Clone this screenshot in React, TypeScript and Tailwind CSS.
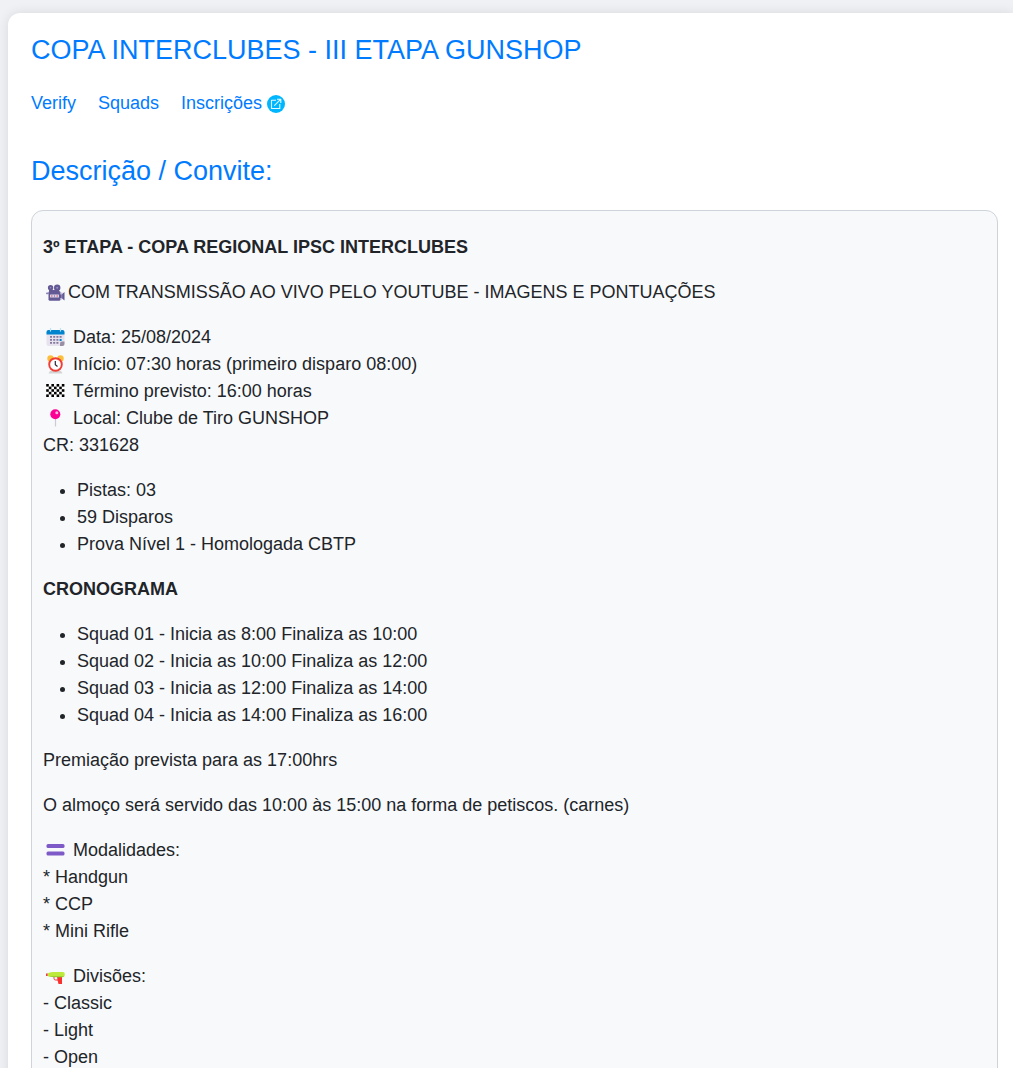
import type { ReactNode } from "react";

const iconClass = "mx-[3px] inline-block h-[19px] w-[19px] align-[-4px]";

function Icon({ children }: { children: ReactNode }) {
  return (
    <svg viewBox="0 0 19 19" className={iconClass} aria-hidden="true">
      {children}
    </svg>
  );
}

function CameraIcon() {
  return (
    <Icon>
      <circle cx="4.6" cy="4.700" r="2.700" fill="#635994" />
      <circle cx="11.200" cy="4.700" r="3.200" fill="#635994" />
      <circle cx="4.600" cy="4.700" r=".8" fill="#998ec7" />
      <circle cx="11.200" cy="4.700" r="1" fill="#998ec7" />
      <path d="M3 7h10v2H3z" fill="#635994" />
      <rect x="2.500" y="8" width="12" height="9.700" rx="1.500" fill="#635994" />
      <path d="M14 11.500h1.500L18.500 9v8.500l-3-2.500H14z" fill="#635994" />
      <path d="M15.800 9.500v7" stroke="#a39cc8" strokeWidth=".8" />
      <rect x="0" y="9.500" width="3" height="1.800" rx=".8" fill="#8b84b5" />
      <rect x="4" y="11.500" width="9" height="3" rx=".5" fill="#d9d5e8" />
      <rect x="5" y="12.500" width="1.500" height="1" fill="#e84a5c" />
      <rect x="8" y="12.500" width="1" height="1" fill="#635994" />
      <rect x="10.500" y="12.500" width="1.500" height="1" fill="#e84a5c" />
    </Icon>
  );
}

function CalendarIcon() {
  return (
    <Icon>
      <path d="M.5 3h18v12l-3 3h-13a2 2 0 0 1-2-2z" fill="#e7e3ee" />
      <path d="M18.500 13.500V16a2 2 0 0 1-2 2H14v-2.500a2 2 0 0 1 2-2z" fill="#998ea4" />
      <path d="M.5 6.500V4a2 2 0 0 1 2-2h14a2 2 0 0 1 2 2v2.500z" fill="#0084ce" />
      <path d="M4.500 0v3.500M14.500 0v3.500" stroke="#bde4f5" strokeWidth="1.200" />
      <path
        d="M4 8h2v1.800H4zM7.200 8h2v1.800h-2zM10.400 8h2v1.800h-2zM13.600 8h2v1.800h-2zM4 11h2v1.800H4zM7.200 11h2v1.800h-2zM10.400 11h2v1.800h-2zM4 14h2v1.800H4zM7.200 14h2v1.800h-2zM10.400 14h2v1.800h-2z"
        fill="#83789d"
      />
      <path d="M13.600 11h2v2h-2z" fill="#0084ce" />
    </Icon>
  );
}

function AlarmIcon() {
  return (
    <Icon>
      <path d="M4 16h11l1.500 2.500h-14z" fill="#d3d3d3" />
      <circle cx="4.500" cy="3.500" r="3.200" fill="#fcbf3b" />
      <circle cx="14.500" cy="3.500" r="3.200" fill="#fcbf3b" />
      <circle cx="9.500" cy="9.500" r="6.300" fill="#fff" stroke="#f13b35" strokeWidth="1.900" />
      <path d="M9.300 6v3.800l2.200 1.700" fill="none" stroke="#2b2630" strokeWidth="1.200" />
    </Icon>
  );
}

function CheckeredIcon() {
  const squares: ReactNode[] = [];
  for (let row = 0; row < 5; row++) {
    for (let col = 0; col < 7; col++) {
      if ((row + col) % 2 === 0) {
        squares.push(
          <rect key={`${row}-${col}`} x={0.2 + col * 2.6} y={2 + row * 2.6} width="2.6" height="2.6" />,
        );
      }
    }
  }
  return (
    <Icon>
      <rect x=".2" y="2" width="18.200" height="13" fill="#fff" />
      <g fill="#000">{squares}</g>
    </Icon>
  );
}

function PinIcon() {
  return (
    <Icon>
      <path d="M9.500 9v8.500" stroke="#cfcbd6" strokeWidth="1.200" />
      <circle cx="9.300" cy="5.200" r="5" fill="#fc0095" />
      <circle cx="10.800" cy="3.800" r="1.500" fill="#ffb8e0" />
    </Icon>
  );
}

function EqualsIcon() {
  return (
    <Icon>
      <rect x=".5" y="3" width="18" height="4" rx="1.500" fill="#7d5ac7" />
      <rect x=".5" y="10.500" width="18" height="4" rx="1.500" fill="#7d5ac7" />
    </Icon>
  );
}

function WaterGunIcon() {
  return (
    <Icon>
      <path d="M0 6.500h2V9H0z" fill="#f92f60" />
      <path d="M11 9.500h5v7.500h-3.500L11.500 13z" fill="#f8312f" />
      <path d="M8 10v1.500q0 1.500 1.500 1.500h3" fill="none" stroke="#f8312f" strokeWidth="1" />
      <path d="M1.500 6.500q2-1.500 5-1.500H17q1.700 0 1.700 1.700v1.600q0 1.700-1.700 1.700H7Q3 10 1.500 9z" fill="#bdea3a" />
      <path d="M3 9q3 1.300 6 1.300h8l1-1.300z" fill="#9bce32" />
    </Icon>
  );
}

function ExternalIcon() {
  return (
    <svg viewBox="0 0 18 18" className="ml-[5px] inline-block h-[18px] w-[18px] align-[-4px]" aria-hidden="true">
      <circle cx="9" cy="9" r="9" fill="#00b7ff" />
      <path
        d="M9 5.200H4.500v8.300h8.300V9M10 4.200h3.800V8M13.800 4.200 7.300 10.700"
        fill="none"
        stroke="#e8faff"
        strokeWidth="1.100"
        strokeLinejoin="round"
      />
    </svg>
  );
}

const squads = [
  "Squad 01 - Inicia as 8:00 Finaliza as 10:00",
  "Squad 02 - Inicia as 10:00 Finaliza as 12:00",
  "Squad 03 - Inicia as 12:00 Finaliza as 14:00",
  "Squad 04 - Inicia as 14:00 Finaliza as 16:00",
];

function BulletList({ items }: { items: string[] }) {
  return (
    <ul className="list-disc pl-[34px]">
      {items.map((item) => (
        <li key={item}>{item}</li>
      ))}
    </ul>
  );
}

export default function App() {
  return (
    <div className="flex h-screen flex-col overflow-hidden bg-[#f0f1f5] pt-[13px] pl-2 font-['Liberation_Sans',Arial,sans-serif] text-[18px] leading-[27px] text-[#212529]">
      <main className="grow rounded-tl-xl bg-white pt-5 pr-[15px] pl-[23px] shadow-[0_0_12px_rgba(0,0,0,0.1)]">
        <h1 className="text-[27px] leading-[34px] text-[#007bff]">COPA INTERCLUBES - III ETAPA GUNSHOP</h1>
        <nav className="mt-[23px] flex gap-[22px] text-[#007bff]">
          <a href="#verify">Verify</a>
          <a href="#squads">Squads</a>
          <a href="#inscricoes">
            Inscrições
            <ExternalIcon />
          </a>
        </nav>
        <h2 className="mt-[37px] text-[27px] leading-[34px] text-[#007bff]">Descrição / Convite:</h2>
        <section className="mt-[22px] flex flex-col gap-[18px] rounded-xl border border-[#ced4da] bg-[#f8f9fb] px-[11px] py-[23px]">
          <p className="font-bold">3º ETAPA - COPA REGIONAL IPSC INTERCLUBES</p>
          <p>
            <CameraIcon />
            COM TRANSMISSÃO AO VIVO PELO YOUTUBE - IMAGENS E PONTUAÇÕES
          </p>
          <p>
            <CalendarIcon /> Data: 25/08/2024
            <br />
            <AlarmIcon /> Início: 07:30 horas (primeiro disparo 08:00)
            <br />
            <CheckeredIcon /> Término previsto: 16:00 horas
            <br />
            <PinIcon /> Local: Clube de Tiro GUNSHOP
            <br />
            CR: 331628
          </p>
          <BulletList items={["Pistas: 03", "59 Disparos", "Prova Nível 1 - Homologada CBTP"]} />
          <p className="font-bold">CRONOGRAMA</p>
          <BulletList items={squads} />
          <p>Premiação prevista para as 17:00hrs</p>
          <p>O almoço será servido das 10:00 às 15:00 na forma de petiscos. (carnes)</p>
          <p>
            <EqualsIcon /> Modalidades:
            <br />* Handgun
            <br />* CCP
            <br />* Mini Rifle
          </p>
          <p>
            <WaterGunIcon /> Divisões:
            <br />- Classic
            <br />- Light
            <br />- Open
          </p>
        </section>
      </main>
    </div>
  );
}
